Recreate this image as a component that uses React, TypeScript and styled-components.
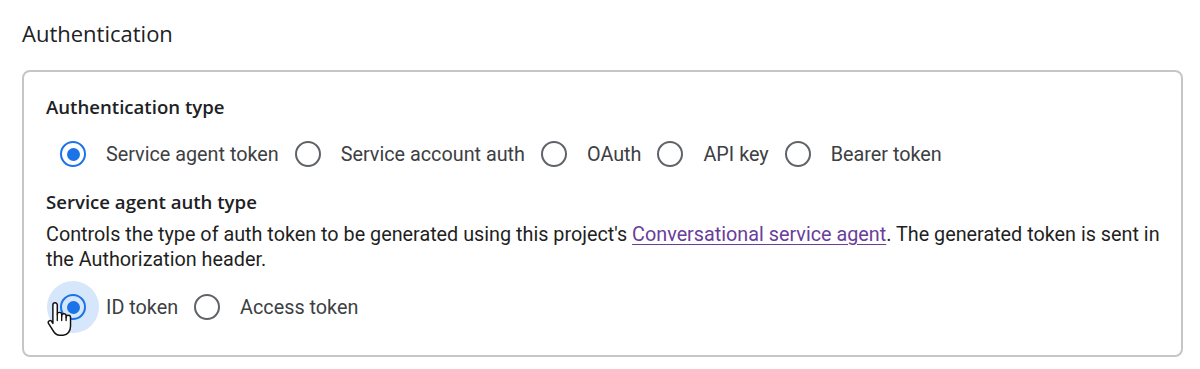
import styled, { createGlobalStyle } from "styled-components";

const colors = {
  text: "#1f1f1f",
  label: "#3c4043",
  border: "#c4c7c5",
  primary: "#1a73e8",
  outline: "#5f6368",
  link: "#6a3d9a",
};

const GlobalStyle = createGlobalStyle`
  body {
    margin: 0;
    background: #ffffff;
    font-family: Roboto, "Liberation Sans", sans-serif;
    color: ${colors.text};
  }
`;

const Page = styled.div`
  padding: 19px 17px 0 22px;
`;

const Heading = styled.h2`
  margin: 0;
  font-family: "Open Sans", Roboto, sans-serif;
  font-size: 22px;
  line-height: 28px;
  font-weight: 400;
  color: #202124;
`;

const Card = styled.section`
  margin-top: 23px;
  border: 2px solid ${colors.border};
  border-radius: 8px;
  padding: 24px 10px 28px 22px;
`;

const Title = styled.div<{ $gap?: number }>`
  margin-top: ${(p) => p.$gap ?? 0}px;
  font-family: "Open Sans", Roboto, sans-serif;
  font-size: 18.6px;
  line-height: 22px;
  font-weight: 600;
  color: #202124;
`;

const Description = styled.p`
  margin: 9px 0 0;
  font-size: 19.8px;
  line-height: 25px;
  color: ${colors.text};

  a {
    color: ${colors.link};
    text-decoration: underline;
    text-underline-offset: 3px;
  }
`;

const RadioGroup = styled.div<{ $gap: number }>`
  margin-top: ${(p) => p.$gap}px;
  display: flex;
  align-items: center;
  padding-left: 7px;
  gap: 9px;
`;

const Option = styled.label`
  display: flex;
  align-items: center;
  gap: 13px;
  font-size: 19.8px;
  color: ${colors.label};
`;

const RadioWrap = styled.span`
  position: relative;
  width: 40px;
  height: 40px;
  display: flex;
  align-items: center;
  justify-content: center;
`;

const Halo = styled.span`
  position: absolute;
  left: -6px;
  top: -6px;
  width: 52px;
  height: 52px;
  border-radius: 50%;
  background: rgba(26, 115, 232, 0.18);
`;

const Circle = styled.span<{ $checked: boolean }>`
  position: relative;
  box-sizing: border-box;
  width: 26px;
  height: 26px;
  border-radius: 50%;
  border: 2.5px solid ${(p) => (p.$checked ? colors.primary : colors.outline)};
  display: flex;
  align-items: center;
  justify-content: center;

  &::after {
    content: "";
    width: 13px;
    height: 13px;
    border-radius: 50%;
    background: ${colors.primary};
    display: ${(p) => (p.$checked ? "block" : "none")};
  }
`;

const Cursor = styled.svg`
  position: absolute;
  left: -6px;
  top: 14px;
  width: 25px;
  height: 36px;
  z-index: 2;
`;

const HandCursor = () => (
  <Cursor viewBox="0 0 17 24">
    <path
      d="M4 2.5a1.5 1.5 0 0 1 3 0V9a1.5 1.5 0 0 1 3 0v1a1.5 1.5 0 0 1 3 0v1a1.5 1.5 0 0 1 3 0V17c0 3.2-2 6-5 6H8.5c-2 0-3-1-4-2.5L1 15a1.3 1.3 0 0 1 2-1.6L4 15Z"
      fill="#fff"
      stroke="#111"
      strokeWidth="1"
      strokeLinejoin="round"
    />
    <path d="M7 9v4M10 10v3M13 11v2" stroke="#111" strokeWidth="0.9" strokeLinecap="round" />
  </Cursor>
);

type Item = { label: string; checked?: boolean; hovered?: boolean };

const Radio = ({ label, checked = false, hovered = false }: Item) => (
  <Option>
    <RadioWrap>
      {hovered && <Halo />}
      <Circle $checked={checked} />
      {hovered && <HandCursor />}
    </RadioWrap>
    {label}
  </Option>
);

const authTypes: Item[] = [
  { label: "Service agent token", checked: true },
  { label: "Service account auth" },
  { label: "OAuth" },
  { label: "API key" },
  { label: "Bearer token" },
];

const tokenTypes: Item[] = [
  { label: "ID token", checked: true, hovered: true },
  { label: "Access token" },
];

export default function App() {
  return (
    <Page>
      <GlobalStyle />
      <Heading>Authentication</Heading>
      <Card>
        <Title>Authentication type</Title>
        <RadioGroup $gap={16}>
          {authTypes.map((t) => (
            <Radio key={t.label} {...t} />
          ))}
        </RadioGroup>
        <Title $gap={17}>Service agent auth type</Title>
        <Description>
          Controls the type of auth token to be generated using this project's{" "}
          <a href="#">Conversational service agent</a>. The generated token is sent in
          the Authorization header.
        </Description>
        <RadioGroup $gap={15}>
          {tokenTypes.map((t) => (
            <Radio key={t.label} {...t} />
          ))}
        </RadioGroup>
      </Card>
    </Page>
  );
}
